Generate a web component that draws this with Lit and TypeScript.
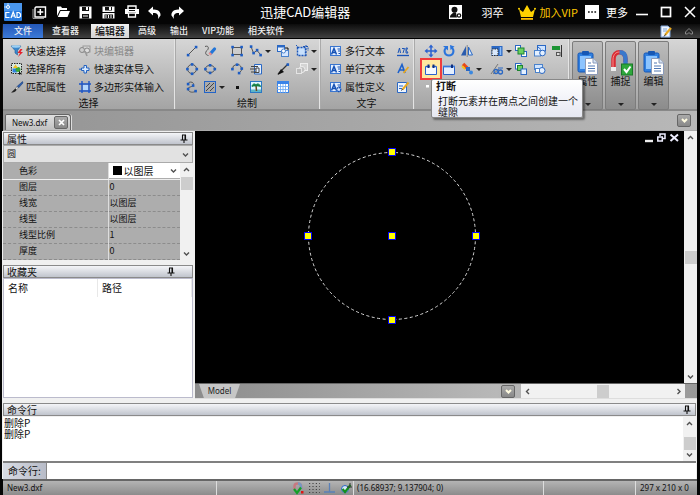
import { LitElement, html, svg, css, nothing, type SVGTemplateResult } from "lit";
import { customElement, property } from "lit/decorators.js";

const dot = (x: number, y: number) => svg`<rect x=${x - 1.2} y=${y - 1.2} width="2.600" height="2.600" fill="#1c5cc4"/>`;
const textPage = svg`<rect x=".5" y="1.5" width="10" height="9" fill="#e4efff" stroke="#3a76d0"/>
  <path d="M1.500 9.500L4 3.500 6.500 9.500M2.500 7.500H6" stroke="#1450b4" stroke-width="1.500" fill="none"/>
  <path d="M7.500 4H10M8 6H10M8.500 8.500H10" stroke="#1450b4"/>`;
const clipboard = svg`<rect x="1" y="3" width="15" height="19" rx="1.500" fill="#2f7fe0" stroke="#1757b4"/>
  <rect x="3" y="6" width="11" height="13" fill="#8cc4ff"/>
  <rect x="5" y="1" width="7" height="4" rx="1" fill="#1757b4"/>
  <path d="M8.500 8.500H16L20.500 13V24.500H8.500Z" fill="#fff" stroke="#8a9ab8"/>
  <path d="M16 8.500V13H20.500" fill="#d4e2f4" stroke="#8a9ab8"/>
  <path d="M11 13H14M11 16H18M11 18.500H18M11 21H18" stroke="#5078b4"/>`;

const ICONS: Record<string, SVGTemplateResult> = {
  logo: svg`<rect width="18" height="18" rx="1" fill="#2b7de0"/><rect width="18" height="8" fill="#4a97ee"/>
    <circle cx="4" cy="4" r="1.500" fill="none" stroke="#fff"/><path d="M4 0V2M0 4H2" stroke="#bcdcff"/>
    <path d="M5.500 9.500H1.800V14.500H5.500M7 15L9.200 9 11.500 15M8 13H10.500M13 9.500H15L16.500 11V13.500L15 14.500H13Z" fill="none" stroke="#fff" stroke-width="1.200"/>`,
  create: svg`<path d="M3 1H12.500V11H2V2Z" fill="none" stroke="#fff" stroke-width="1.400"/><path d="M7.300 3V9M4.300 6H10.300" stroke="#fff" stroke-width="1.500"/><path d="M0 3V12.500H11" stroke="#999" fill="none"/>`,
  open: svg`<path d="M1 11V1.500H5L6 3H11V5H4Z" fill="#fff"/><path d="M4.500 6H14L11.500 12H1.800Z" fill="#fff"/>`,
  save: svg`<path d="M.5 .5H12.500V12.500H.5Z" fill="#fff"/><path d="M3 1H10V5H3Z M3 8H10V12.500H3Z" fill="#111"/><rect x="7" y="1" width="2" height="3" fill="#fff"/><path d="M4 10H9" stroke="#fff"/>`,
  saveAs: svg`<path d="M.5 .5H12.500V6H.5Z M.5 7H12.500V12.500H.5Z" fill="#fff"/><path d="M3 1H10V4.500H3Z M2.500 8.500H11V12.500H2.500Z" fill="#111"/><rect x="7" y="1" width="2" height="3" fill="#fff"/><path d="M4 9V12M6.500 9V12M9 9V12" stroke="#fff"/>`,
  print: svg`<path d="M3 4V1H11V4" fill="none" stroke="#fff" stroke-width="1.400"/><path d="M0 4H14V9H11V7H3V9H0Z" fill="#fff"/><path d="M3.500 8H10.500V12H3.500Z" fill="none" stroke="#fff" stroke-width="1.300"/><rect x="4" y="5" width="6" height="1" fill="#111"/>`,
  undo: svg`<path d="M0 5L5 .5V3.500C10 3 13 6 12.500 9.500L10 13C11 8.500 9 6.800 5 7V9.500Z" fill="#fff"/>`,
  redo: svg`<path d="M13 5L8 .5V3.500C3 3 0 6 .5 9.500L3 13C2 8.500 4 6.800 8 7V9.500Z" fill="#fff"/>`,
  user: svg`<rect width="13" height="14" fill="#fff"/><circle cx="5.500" cy="4.800" r="3" fill="#111"/><path d="M1 12.500C1 9.500 3 9 4.500 7.500H7L8 12.500Z" fill="#111"/><circle cx="10" cy="10.500" r="1.700" fill="#fff" stroke="#111" stroke-width="1.200"/>`,
  crown: svg`<path d="M1 4L5 7 9 0 13 7 17 4 15 12H3Z" fill="#ffd200"/><rect x="3" y="13" width="12" height="1.800" fill="#ffc000"/><circle cx="1" cy="3.800" r="1" fill="#ffd200"/><circle cx="17" cy="3.800" r="1" fill="#ffd200"/>`,
  more: svg`<rect width="14" height="14" fill="#fff"/><path d="M3 7H4.700M6.200 7H7.900M9.400 7H11.100" stroke="#111" stroke-width="1.700"/>`,
  minimize: svg`<path d="M0 8.500H12" stroke="#fff" stroke-width="1.600"/>`,
  maximize: svg`<rect x="1.500" y="1.500" width="9" height="9" fill="none" stroke="#fff" stroke-width="1.700"/>`,
  close: svg`<path d="M1 1L11 11M11 1L1 11" stroke="#fff" stroke-width="1.500"/>`,
  note: svg`<path d="M1 1H8L10 3V12H1Z" fill="#eef5ff" stroke="#7fa4d8"/><path d="M3 4H7M3 6H7" stroke="#7fa4d8"/><path d="M11 3L5 10" stroke="#e8a820" stroke-width="2.200"/><path d="M5.500 9.500L4 11.500" stroke="#333"/>`,
  collapse: svg`<path d="M1.500 6L5 2.500 8.500 6V8H6.500L5 6.500 3.500 8H1.500Z" fill="none" stroke="#888"/>`,
  quick: svg`<path d="M0 1H10L6.500 5.500V10L4 8V5.500Z" fill="#3b88cc" stroke="#1d5c98" stroke-width=".6"/><ellipse cx="5" cy="1.500" rx="4.500" ry="1.200" fill="#9cd0f4"/><path d="M9.500 4L6.500 8H9L7 12 12 7H9.500L11.500 4Z" fill="#e4202c"/>`,
  all: svg`<rect x=".5" y=".5" width="10" height="10" fill="#d8e8e0" stroke="#222" stroke-dasharray="1.500 1"/><rect x="1.500" y="5.500" width="4.500" height="4" fill="#2e80e0"/><circle cx="7" cy="6.500" r="2.500" fill="#38a838"/><path d="M2 5L4.500 1.500 7 5Z" fill="#f0c020"/><path d="M8 7.500V12L9.200 11 11 12Z" fill="#111"/>`,
  match: svg`<path d="M11.500 .5L6 5.500 7.500 7 12 2Z" fill="#2a5cae" stroke="#143870" stroke-width=".5"/><path d="M6 5.500L7.500 7 5.500 8.500 4.500 7.500Z" fill="#ddd" stroke="#555" stroke-width=".5"/><path d="M4.500 7.500L5.500 9C4.500 11 2.500 11.500 0 11.500 2 10.500 2.500 8.500 4.500 7.500Z" fill="#222"/>`,
  blockEdit: svg`<rect x="4" y="1" width="7" height="6" fill="#d4d4d4" stroke="#999"/><circle cx="3" cy="5" r="2.500" fill="#ccc" stroke="#888"/><circle cx="8" cy="5.500" r="2.500" fill="#ddd" stroke="#888"/><path d="M6 6L8 11" stroke="#999" stroke-width="1.600"/>`,
  importSolid: svg`<path d="M5 2.500H7.500V5H10V7.500H7.500V10H5V7.500H2.500V5H5Z" fill="#d8eaff" stroke="#2362c0"/><path d="M0 6.200H2" stroke="#2362c0"/>`,
  polygon: svg`<path d="M3 0V12M10 0V12M0 3H12M0 10H12" stroke="#1b55c8" stroke-width="1.400"/><rect x="4" y="4" width="5" height="5" fill="#b4d8ff"/>`,
  line: svg`<path d="M2 10L10 2" stroke="#555"/>${dot(2, 10)}${dot(10, 2)}`,
  sketch: svg`<path d="M1 1.500C5 0 5 4 3 5.500S1 10 4.500 10.500" fill="none" stroke="#555"/><path d="M7 8L10.500 4" stroke="#2376d8" stroke-width="3.200" stroke-linecap="round"/><path d="M5.500 9.500L7 8" stroke="#e88c8c" stroke-width="3"/>`,
  rect: svg`<rect x="1.500" y="2.500" width="9" height="7" fill="none" stroke="#555"/>${dot(1.5, 2)}${dot(10.5, 2)}${dot(1.5, 10)}${dot(10.5, 10)}`,
  poly: svg`<path d="M1 1.500L3.500 8 7 5.500 10.500 9.500" fill="none" stroke="#555"/>${dot(1, 1.5)}${dot(3.5, 8)}${dot(7, 5)}${dot(10.5, 10)}`,
  insert: svg`<rect x=".5" y=".5" width="7" height="6" fill="#e8f2ff" stroke="#2a68c4"/><rect y="0" width="8" height="2.500" fill="#2a68c4"/><rect x="4.500" y="5.500" width="7" height="6" fill="#d4e6ff" stroke="#4a82cc"/><circle cx="6.500" cy="6" r="2" fill="#fff" stroke="#4a82cc"/><path d="M8 3H11V5" stroke="#111" fill="none"/>`,
  block: svg`<rect x="1.500" y="2.500" width="8" height="8" fill="#c8e0fc" stroke="#1b55b8" stroke-width="1.400" stroke-dasharray="2 1"/><path d="M0 0L3 3M7 1.500H12V6M10 0V12" stroke="#1b55b8" stroke-dasharray="2 1" fill="none"/>`,
  circle: svg`<circle cx="6" cy="6" r="4.500" fill="none" stroke="#555"/>${dot(6, 1.3)}${dot(6, 10.7)}${dot(1.3, 6)}${dot(10.7, 6)}`,
  ellipse: svg`<ellipse cx="6" cy="6" rx="4.500" ry="3.500" fill="none" stroke="#555"/>${dot(6, 2.2)}${dot(6, 9.8)}${dot(1.3, 6)}${dot(10.7, 6)}`,
  arc: svg`<path d="M1.500 6A4.500 4.500 0 1 1 8 10" fill="none" stroke="#555"/>${dot(1.3, 6)}${dot(6, 1.6)}${dot(10.7, 5.5)}${dot(8, 10)}`,
  copyBlock: svg`<path d="M4.500 1.500H11.500V11H4.500Z" fill="#e4f0ff" stroke="#2a68c4"/><path d="M1 3.500H8M0 6H6M1 9H6V5H9V9.500H4" stroke="#444" fill="none"/>`,
  ray: svg`<path d="M1 11L11 1" stroke="#333" stroke-width="1.300"/><path d="M.5 12L4 6 7 9Z" fill="#111"/>${dot(10.7, 1.5)}`,
  wipe: svg`<rect x="4.500" y=".5" width="7" height="7" fill="#d4d4d4" stroke="#eee"/><circle cx="6" cy="6.500" r="3" fill="#c0c0c0" stroke="#eee"/><rect x=".5" y="5.500" width="5" height="5" fill="#bbb" stroke="#e4e4e4"/>`,
  spline: svg`<path d="M2 3.500C2 0 8 .5 7.500 3.500S1 5.500 2 8.500 7.500 12 9.500 10" fill="none" stroke="#555"/>${dot(2, 3)}${dot(7, 4.5)}${dot(2, 8)}${dot(9.5, 10)}`,
  hatch: svg`<rect x=".5" y=".5" width="11" height="11" fill="#aaa" stroke="#2264c8"/><path d="M2 6L6 2M2 10L10 2M6 10L10 6" stroke="#444"/>`,
  point: svg`<rect x="5" y="5" width="3" height="3" fill="#111"/>`,
  image: svg`<rect x=".5" y=".5" width="11" height="11" fill="#dff4ff" stroke="#2a78c4"/><rect x="1" y="8.500" width="10" height="2.500" fill="#5cb4c8"/><path d="M6 4L6.500 10" stroke="#6a4a20" stroke-width="1.500"/><path d="M2 5.500C2 3 5 2 6 4 7 2 10 3 10.500 5.500 8.500 4.500 7 5 6 5 4.500 5 3 4.500 2 5.500Z" fill="#148044" stroke="#148044"/>`,
  table: svg`<rect x=".5" y=".5" width="11" height="11" fill="#fff" stroke="#3a84e8"/><rect width="12" height="3" fill="#3a84e8"/><path d="M3.500 3V12M6 3V12M8.500 3V12M0 5.500H12M0 8.500H12" stroke="#6aa8f4" stroke-width=".8"/>`,
  mtext: textPage,
  stext: textPage,
  atext: svg`${textPage}<circle cx="8.800" cy="8.500" r="2" fill="#cfe2ff" stroke="#1450b4" stroke-width="1.300" stroke-dasharray="1.500 .6"/>`,
  spell: svg`<path d="M0 10.500H12" stroke="#1b55b8" stroke-width="1.300"/><path d="M1 8L2.500 3 3.500 8M5 3.500H7.500L6 8M9 8V3H10.500L9.500 5.500 11 8H9" fill="none" stroke="#1b55b8"/>`,
  style: svg`<path d="M1 10L5 1.500 8 10M2.500 7H7" stroke="#1b60cc" stroke-width="1.600" fill="none"/><path d="M11.500 4L6.500 10" stroke="#e8a820" stroke-width="1.800"/>`,
  editText: svg`<path d="M.5 1.500H9.500V11.500H.5Z" fill="#eef5ff" stroke="#2a68c4"/><path d="M2 5H6M2 7.500H5" stroke="#2a68c4"/><path d="M11.500 1.500L5.500 8.500" stroke="#e8a820" stroke-width="2"/><path d="M5.500 8L4.500 9.500" stroke="#222"/>`,
  move: svg`<path d="M6 1V11M1 6H11" stroke="#2a62d0" stroke-width="1.500"/><path d="M6 -.5L8.500 2.500H3.500ZM6 12.500L8.500 9.500H3.500ZM-.5 6L2.500 3.500V8.500ZM12.500 6L9.500 3.500V8.500Z" fill="#2a62d0"/>`,
  rotate: svg`<path d="M3.500 2.500C0 5 1.500 10.500 6 10.500S12 5 8.500 2.500" fill="none" stroke="#2a74dc" stroke-width="2"/><path d="M0 1H5V5.500ZM7 0L11.500 1.500 7.500 5Z" fill="#2a74dc"/>`,
  mirror: svg`<path d="M5 1V10.500H0Z" fill="#2a5cae"/><path d="M7.500 2V10H11.500Z" fill="#d8eaff" stroke="#2a68c4"/><path d="M6.200 0V12" stroke="#666" stroke-width=".7"/>`,
  scale: svg`<rect x=".5" y="1" width="11" height="10" fill="#2a68c4"/><rect x="1" y="4" width="6" height="6.500" fill="#d8e8fc" stroke="#333" stroke-dasharray="1.500 1"/><path d="M9.500 2V10" stroke="#8cbcf8" stroke-width="1.500"/>`,
  order: svg`<rect x=".5" y=".5" width="5" height="5" fill="#fff" stroke="#2a68c4"/><rect x="6.500" y="6.500" width="5" height="5" fill="#fff" stroke="#2a68c4"/><rect x="3" y="3" width="6" height="6" fill="#6cd060" stroke="#1c8430"/>`,
  redraw: svg`<rect x="3.500" y=".5" width="8" height="5.500" fill="#cfe4ff" stroke="#2a68c4"/><rect x=".5" y="5.500" width="6" height="5.500" fill="#e4f0ff" stroke="#4a82cc"/><circle cx="8.500" cy="8" r="2.800" fill="#e4f0ff" stroke="#2a68c4"/><path d="M4 2L7 4.500" stroke="#2a68c4"/>`,
  align: svg`<path d="M9.500 0V12" stroke="#333"/><rect x="0" y="1" width="8" height="4" fill="#1c9434"/><rect x="4.500" y="7.500" width="3.500" height="3" fill="#ddd" stroke="#555"/>`,
  breakAt: svg`<path d="M.5 3.500H11.500V11.500H.5Z" fill="#f4f9ff" stroke="#2a62cc"/><rect x="4.500" y="2.500" width="3" height="2" fill="#ffe9a0"/><path d="M1 3.500H4.500M7.500 3.500H11" stroke="#2a62cc" stroke-width="1.600"/><path d="M3.500 1.500V5M8.500 1.500V5" stroke="#0c2e80" stroke-width="2"/>`,
  breakPoint: svg`<path d="M.5 3.500H11.500V11.500H.5Z" fill="#e4efff" stroke="#2a62cc"/><path d="M0 3.500H12" stroke="#3a78dc" stroke-width="1.800"/><path d="M9 1.500V5" stroke="#0c2e80" stroke-width="2"/>`,
  explode: svg`<path d="M2 1L6 5" stroke="#e84818" stroke-width="3.500"/><path d="M1 3L4 6" stroke="#f0c020" stroke-width="2"/><rect x="5" y="4" width="4" height="4" fill="#2a68c4"/><circle cx="10" cy="9.500" r="2" fill="#3a88e0"/>`,
  trim: svg`<path d="M0 11L7 1M2 11L8 6" stroke="#777"/><circle cx="5" cy="8.500" r="2" fill="none" stroke="#2a68c4" stroke-width="1.300"/><circle cx="9.500" cy="9" r="2" fill="none" stroke="#2a68c4" stroke-width="1.300"/><path d="M7 5H12" stroke="#2a68c4"/>`,
  group: svg`<rect x=".5" y=".5" width="5.500" height="5.500" fill="#fff" stroke="#2a68c4"/><rect x="2.500" y="2.500" width="5" height="5" fill="#6cd060" stroke="#1c8430"/><rect x="6" y="6" width="5.500" height="5.500" fill="#e4f0ff" stroke="#2a68c4"/>`,
  ungroup: svg`<rect x=".5" y="1.500" width="8" height="5" fill="#cfe4ff" stroke="#4a82cc"/><circle cx="8" cy="7.500" r="3" fill="#e4f0ff" stroke="#2a68c4"/><rect x="1.500" y="5.500" width="4" height="4" fill="#fff" stroke="#4a82cc"/>`,
  offset: svg`<rect x="1" y="4" width="3" height="2.500" fill="#fff"/>`,
  props: clipboard,
  snap: svg`<path d="M3.500 21V9C3.500 0 15.500 0 15.500 9V12" fill="none" stroke="#d82c34" stroke-width="4.500"/><path d="M9.500 2.300C14 2.300 15.500 5 15.500 9V16" fill="none" stroke="#3a78cc" stroke-width="4.500"/><path d="M3 17V9C3.500 4 6 2 9.500 2" fill="none" stroke="#f88c8c"/><rect x="1" y="17" width="5" height="4" fill="#eee"/><rect x="11.500" y="14" width="11" height="11" fill="#2ea83c" stroke="#1a7828"/><path d="M14 19L16.500 22 20.500 16.500" fill="none" stroke="#fff" stroke-width="2"/>`,
  edit: clipboard,
  pin: svg`<path d="M3 1H7M3.500 1V6M6.500 1V6M1.500 6H8.500M5 6V9" stroke="#111" stroke-width="1.100" fill="none"/><path d="M6 1V6" stroke="#111"/>`,
  mdiMin: svg`<path d="M0 7H8" stroke="#eee" stroke-width="2.400"/>`,
  mdiRestore: svg`<path d="M3 3V1H8V5.500H6" fill="none" stroke="#eef" stroke-width="1.500"/><rect x=".8" y="4" width="4.500" height="4" fill="none" stroke="#eef" stroke-width="1.500"/>`,
  mdiClose: svg`<path d="M.5 1.500L8 8M8 1.500L.5 8" stroke="#eef" stroke-width="2"/>`,
  up: svg`<path d="M2 6L4.500 3.500 7 6" fill="none" stroke="#505050" stroke-width="1.400"/>`,
  down: svg`<path d="M2 3.500L4.500 6 7 3.500" fill="none" stroke="#505050" stroke-width="1.400"/>`,
  left: svg`<path d="M6 2L3.500 4.500 6 7" fill="none" stroke="#505050" stroke-width="1.400"/>`,
  right: svg`<path d="M3.500 2L6 4.500 3.500 7" fill="none" stroke="#505050" stroke-width="1.400"/>`,
  menu: svg`<path d="M2 3L4.500 5.500 7 3" fill="none" stroke="#fffbe0" stroke-width="2"/>`,
  tabClose: svg`<path d="M2 2L7 7M7 2L2 7" stroke="#fff" stroke-width="1.700"/>`,
  osnap: svg`<path d="M2.500 7V4C2.500 .5 9 .5 9 4V7" fill="none" stroke="#c87880" stroke-width="2.500"/><path d="M6 1.500C9 1.500 9 3 9 7" fill="none" stroke="#7898c0" stroke-width="2.500"/><path d="M2 7L5 11 9 5.500" fill="none" stroke="#14a028" stroke-width="2.200"/><rect x="9" y="9" width="2.500" height="2.500" fill="#e01414"/>`,
  grid: svg`<path d="M1 1.500H12M1 4.500H12M1 7.500H12M1 10.500H12" stroke="#444" stroke-width="1.200" stroke-dasharray="1.200 2.200"/>`,
  ortho: svg`<path d="M5.500 1V10M0 10H11" stroke="#5a80b8" stroke-width="1.300"/>`,
  polar: svg`<circle cx="5" cy="7" r="3.500" fill="#d8e8f8" stroke="#2a68c4"/><path d="M2.500 7L5 10 10.500 3" fill="none" stroke="#14901c" stroke-width="2.200"/><path d="M7 5H12M10 1V4" stroke="#333"/>`,
};

@customElement("cad-icon")
export class CadIcon extends LitElement {
  @property() name = "";
  @property({ type: Number }) w = 12;
  @property({ type: Number }) h = 12;
  static styles = css`
    :host { display: inline-flex; flex: none; }
    svg { display: block; overflow: visible; }
  `;
  render() {
    return html`<svg width=${this.w} height=${this.h} viewBox="0 0 ${this.w} ${this.h}" aria-hidden="true">${ICONS[this.name]}</svg>`;
  }
}

const icon = (name: string, w = 12, h = w) => html`<cad-icon name=${name} .w=${w} .h=${h}></cad-icon>`;

const QUICK: [string, string, number][] = [
  ["create", "新建", 13], ["open", "打开", 14], ["save", "保存", 13], ["saveAs", "另存为", 13],
  ["print", "打印", 14], ["undo", "撤销", 13], ["redo", "重做", 13],
];
const TABS = ["文件", "查看器", "编辑器", "高级", "输出", "VIP功能", "相关软件"];
const SELECT_TOOLS = [
  ["quick", "快速选择"], ["blockEdit", "块编辑器"],
  ["all", "选择所有"], ["importSolid", "快速实体导入"],
  ["match", "匹配属性"], ["polygon", "多边形实体输入"],
];
const DRAW_TOOLS = [
  "line", "sketch", "rect", "poly+", "insert", "block+",
  "circle", "ellipse", "arc", "copyBlock", "ray", "wipe+",
  "spline", "hatch+", "point", "image", "table",
];
const TEXT_TOOLS = [
  ["mtext", "多行文本"], ["spell", ""], ["stext", "单行文本"], ["style", ""], ["atext", "属性定义"], ["editText", ""],
];
const MODIFY_TOOLS = [
  "move", "rotate", "mirror", "scale+", "order", "redraw", "align",
  "breakAt", "breakPoint", "explode+", "trim+", "group", "ungroup", "",
  "offset",
];
const PROPS = [["图层", "0"], ["线宽", "以图层"], ["线型", "以图层"], ["线型比例", "1"], ["厚度", "0"]];
const GRIPS = [[197, 21], [113, 105], [197, 105], [281, 105], [197, 189]];

@customElement("app-root")
export class AppRoot extends LitElement {
  static styles = css`
    :host {
      display: flex; flex-direction: column; box-sizing: border-box; min-height: 100vh;
      padding: 0 3px 2px 2px; background: #050505; color: #111;
      font: 10px/12px "Noto Sans CJK SC", "Noto Sans", sans-serif;
    }
    * { box-sizing: border-box; }
    button, select, input, textarea { font: inherit; color: inherit; margin: 0; padding: 0; border: 0; border-radius: 0; background: none; outline: none; }
    button { display: inline-flex; align-items: center; white-space: nowrap; }
    select { appearance: none; }
    .title { display: flex; align-items: center; height: 24px; padding-left: 2px; color: #fff; font-size: 11px; line-height: 16px; }
    .quick { display: flex; margin-left: 6px; }
    .quick button { width: 23px; justify-content: center; }
    .name { flex: 1; margin: 0; padding-right: 28px; text-align: center; font-size: 13px; line-height: 20px; font-weight: 400; }
    .user { gap: 19px; }
    .vip { margin-left: 15px; gap: 3px; color: #ffc800; }
    .more { margin-left: 7px; gap: 7px; }
    .win { display: flex; gap: 12px; margin: 0 1px 0 8px; }
    .tabs { display: flex; height: 15px; margin-right: -3px; background: linear-gradient(#0c0c0c, #404040); border-bottom: 1px solid #000; color: #eee; font-size: 9px; font-weight: 500; }
    .tabs a { padding: 0 7px; line-height: 14px; color: inherit; text-decoration: none; white-space: nowrap; }
    .tabs .file { padding: 0 11px; margin: 0 2px 0 1px; background: linear-gradient(#2458b8, #3c7ad8); }
    .tabs .on { padding: 0 4px; margin: 0 2px 0 5px; background: linear-gradient(#f0f0f0, #d4d4d4); color: #111; font-size: 10px; }
    .tabs .right { display: flex; gap: 12px; align-items: center; margin-left: auto; padding-right: 6px; }
    .ribbon { display: flex; margin-left: 1px; height: 72px; background: linear-gradient(#d6d6d6, #a4a4a4); border-bottom: 2px solid #888; }
    .group { display: flex; flex-direction: column; justify-content: space-between; flex: none; border-right: 1px solid #e4e4e4; box-shadow: 1px 0 #aaa; padding-top: 3px; }
    .group h2 { margin: 0; font-size: 10px; line-height: 14px; font-weight: 400; text-align: center; }
    .tools { display: grid; grid-auto-rows: 18px; align-items: center; }
    .tools button { gap: 3px; }
    .tools button:disabled { color: #8a8a8a; }
    .select { width: 172px; }
    .select .tools { padding-left: 8px; grid-template-columns: 68px auto; }
    .draw { width: 145px; }
    .draw .tools { padding-left: 11px; grid-template-columns: 18px 27px 19px 27px 19px 22px; }
    .text { width: 94px; }
    .text .tools { padding-left: 10px; grid-template-columns: 67px 12px; }
    .modify { width: 155px; }
    .modify .tools { padding-left: 11px; grid-template-columns: 18px 18px 30px 24px 19px 18px 16px; }
    .arrow { border: 3px solid transparent; border-top-color: #222; border-bottom: 0; }
    .hit { position: relative; display: flex; }
    .hit > button { background: #ffe9a0; box-shadow: 0 0 0 3px #ffe9a0, 0 0 0 5px #f03c3c; }
    .tip { position: absolute; z-index: 2; top: 16px; left: 6px; width: 152px; padding: 0 2px 0 4px; background: linear-gradient(#fff, #e6e8f2); border: 1px solid #888; border-radius: 2px; box-shadow: 2px 2px 2px #0006; line-height: 11px; }
    .tip b { display: block; line-height: 12px; }
    .tip p { margin: 0; padding: 3px 0 0 2px; }
    .big { flex-direction: column; width: 31px; height: 69px; margin: 2px 2px 0 0; padding: 8px 0 3px; border: 1px solid #7c7c7c; border-radius: 2px; background: linear-gradient(#bcbcbc, #8c8c8c); }
    .big:first-of-type { margin-left: 3px; }
    .big .arrow { margin-top: auto; }
    .docs { display: flex; align-items: flex-end; justify-content: space-between; height: 20px; margin-left: 1px; padding: 0 6px 0 2px; background: linear-gradient(90deg, #949494, #b8b8b8); border-bottom: 1px solid #aaa; }
    .doc { display: flex; align-items: center; justify-content: space-between; width: 66px; height: 16px; padding: 0 2px 0 6px; border: 1px solid #666; border-bottom: 0; border-radius: 2px 3px 0 0; background: linear-gradient(#e0e0e0, #c0c0c0); box-shadow: 1px 0 #ddd; }
    .small { font: 8px/12px "Noto Sans", "Noto Sans CJK SC", sans-serif; }
    .chip { justify-content: center; width: 14px; height: 13px; border: 1px solid #666; border-radius: 2px; background: linear-gradient(#aaa, #888); }
    .docs .chip { align-self: center; }
    .main { flex: 1; display: flex; background: #f0f0f0; min-height: 0; }
    .side { display: flex; flex-direction: column; width: 193px; flex: none; padding: 1px 2px 1px 1px; }
    .bar { display: flex; align-items: center; justify-content: space-between; height: 13px; flex: none; margin: 0; padding: 0 3px; border: 1px solid #8a8a8a; background: linear-gradient(#f4f5f8, #c0c4cd); font-size: 10px; line-height: 11px; font-weight: 400; }
    .combo { display: flex; align-items: center; height: 18px; border: 1px solid #aaa; background: #e2e2e2; font-size: 9px; }
    .combo select { flex: 1; padding-left: 3px; height: 16px; }
    .combo cad-icon { padding-right: 2px; }
    .props { display: flex; height: 97px; }
    table { flex: 1; border-collapse: collapse; table-layout: fixed; background: #adadad; font-size: 9px; line-height: 12px; }
    th, td { height: 16px; padding: 0; text-align: left; font-weight: 400; border-bottom: 1px dashed #8c8c8c; }
    th { width: 105px; padding-left: 16px; border-right: 1px solid #ddd; }
    td { padding-left: 1px; }
    tr:first-child th { border-bottom: 1px solid #eee; }
    tr:first-child td { padding: 0; border-bottom: 1px solid #eee; }
    .color { display: flex; align-items: center; height: 15px; padding: 0 2px 0 4px; background: #fff; font-size: 10px; }
    .color i { width: 9px; height: 9px; background: #000; }
    .color select { flex: 1; padding-left: 2px; height: 15px; }
    .scroll { display: flex; align-items: center; justify-content: space-between; flex: none; background: #f1f1f1; }
    .scroll.v { flex-direction: column; width: 13px; padding: 2px 0; }
    .scroll i { background: #cdcdcd; width: 12px; height: 13px; }
    .spring { flex: 1; }
    .props .scroll i { margin-top: 3px; }
    .fav { margin-top: 5px; padding-right: 16px; }
    .list { flex: 1; display: flex; align-items: flex-start; border: 1px solid #bbc; background: #fff; }
    .list span { width: 94px; padding: 3px 0 3px 4px; border-right: 1px solid #e8e8e8; }
    .view { flex: 1; display: flex; flex-direction: column; min-width: 0; }
    .stage { flex: 1; display: flex; min-height: 0; }
    .canvas { position: relative; flex: 1; overflow: hidden; background: #000; }
    .canvas svg { display: block; }
    .mdi { position: absolute; top: 2px; right: 5px; display: flex; gap: 4px; }
    .sheets { display: flex; height: 16px; background: linear-gradient(90deg, #8c8c8c, #b8b8b8 60%, #999); border-top: 1px solid #666; border-bottom: 1px solid #ddd; }
    .sheet { justify-content: center; width: 41px; height: 14px; margin-left: 4px; color: #222; background: #c6c6c6; clip-path: polygon(0 0, 100% 0, 88% 100%, 12% 100%); }
    .sheets .chip { margin: 1px 6px 0 auto; }
    .sheets .scroll { width: 164px; height: 14px; padding: 0 2px; margin-right: 12px; }
    .cmd { display: flex; flex-direction: column; background: #f0f0f0; padding: 4px 1px 0; }
    .log { display: flex; height: 46px; margin-top: 1px; background: #fff; border-bottom: 2px solid #808080; }
    .log textarea { flex: 1; padding: 0 1px; resize: none; overflow: hidden; line-height: 11px; }
    .entry { display: flex; height: 16px; }
    .entry label { width: 44px; padding-left: 5px; line-height: 15px; background: linear-gradient(90deg, #d8dce4, #b8bcc8); border-right: 1px solid #888; }
    .entry input { flex: 1; min-width: 0; background: #fff; padding: 0 3px; }
    .status { display: flex; height: 16px; margin-left: 1px; border-top: 2px solid #666; background: linear-gradient(#b4b4b4, #8c8c8c); line-height: 13px; }
    .status > * { border-right: 1px solid #ddd; padding: 0 4px; }
    .file-name { width: 214px; }
    .modes { display: flex; align-items: center; justify-content: flex-end; gap: 4px; width: 137px; padding: 0 1px; }
    .status .coord { flex: 1; padding: 0 3px; }
    .empty { width: 92px; }
    .status .size { width: 61px; border: 0; }
  `;

  private tool(key: string) {
    if (!key) return html`<span></span>`;
    const name = key.replace("+", "");
    const button = html`<button aria-label=${name}>${icon(name)}${key.endsWith("+") ? html`<span class="arrow"></span>` : nothing}</button>`;
    return name === "breakAt"
      ? html`<div class="hit">${button}<div class="tip" role="tooltip"><b>打断</b><p>打断元素并在两点之间创建一个缝隙</p></div></div>`
      : button;
  }

  private labelled([name, label]: string[]) {
    return html`<button ?disabled=${name === "blockEdit"} aria-label=${label || name}>${icon(name)}${label}</button>`;
  }

  render() {
    return html`
      <header class="title">
        ${icon("logo", 18)}
        <div class="quick">${QUICK.map(([n, l, w]) => html`<button aria-label=${l}>${icon(n, w)}</button>`)}</div>
        <h1 class="name">迅捷CAD编辑器</h1>
        <button class="user">${icon("user", 13, 14)}羽卒</button>
        <button class="vip">${icon("crown", 18, 15)}加入VIP</button>
        <button class="more">${icon("more", 14)}更多</button>
        <div class="win">
          <button aria-label="最小化">${icon("minimize")}</button>
          <button aria-label="最大化">${icon("maximize")}</button>
          <button aria-label="关闭">${icon("close")}</button>
        </div>
      </header>
      <nav class="tabs">
        ${TABS.map((t, i) => html`<a href="#" class=${i === 0 ? "file" : i === 2 ? "on" : ""}>${t}</a>`)}
        <div class="right"><button aria-label="样式">${icon("note")}</button><button aria-label="折叠">${icon("collapse", 10)}</button></div>
      </nav>
      <section class="ribbon">
        <div class="group select"><div class="tools">${SELECT_TOOLS.map((t) => this.labelled(t))}</div><h2>选择</h2></div>
        <div class="group draw"><div class="tools">${DRAW_TOOLS.map((t) => this.tool(t))}</div><h2>绘制</h2></div>
        <div class="group text"><div class="tools">${TEXT_TOOLS.map((t) => this.labelled(t))}</div><h2>文字</h2></div>
        <div class="group modify"><div class="tools">${MODIFY_TOOLS.map((t) => this.tool(t))}</div></div>
        ${[["props", "属性"], ["snap", "捕捉"], ["edit", "编辑"]].map(([n, l]) => html`
          <button class="big">${icon(n, 22, 25)}<span>${l}</span><i class="arrow"></i></button>`)}
      </section>
      <div class="docs">
        <div class="doc small">New3.dxf<button class="chip" aria-label="关闭文档">${icon("tabClose", 9)}</button></div>
        <button class="chip" aria-label="文档列表">${icon("menu", 9)}</button>
      </div>
      <main class="main">
        <aside class="side">
          <h2 class="bar">属性${icon("pin", 10)}</h2>
          <div class="combo"><select aria-label="对象"><option>圆</option></select>${icon("down", 9)}</div>
          <div class="props">
            <table>
              <tr><th><label for="color">色彩</label></th><td><div class="color"><i></i><select id="color"><option>以图层</option></select>${icon("down", 9)}</div></td></tr>
              ${PROPS.map(([k, v]) => html`<tr><th>${k}</th><td>${v}</td></tr>`)}
            </table>
            <div class="scroll v">${icon("up", 9)}<i></i><span class="spring"></span>${icon("down", 9)}</div>
          </div>
          <h2 class="bar fav">收藏夹${icon("pin", 10)}</h2>
          <div class="list"><span>名称</span><span>路径</span></div>
        </aside>
        <section class="view">
          <div class="stage">
            <div class="canvas">
              <svg width="490" height="252">
                <circle cx="197" cy="105" r="83.5" fill="none" stroke="#d8d8d8" stroke-dasharray="3 2.500"/>
                ${GRIPS.map(([x, y]) => svg`<rect x=${x - 3.5} y=${y - 3.5} width="7" height="7" fill="#ff0" stroke="#00f"/>`)}
              </svg>
              <div class="mdi">
                <button aria-label="最小化文档">${icon("mdiMin", 8)}</button>
                <button aria-label="还原文档">${icon("mdiRestore", 9)}</button>
                <button aria-label="关闭文档窗口">${icon("mdiClose", 9)}</button>
              </div>
            </div>
            <div class="scroll v">${icon("up", 9)}<i></i>${icon("down", 9)}</div>
          </div>
          <div class="sheets">
            <button class="sheet small">Model</button>
            <button class="chip" aria-label="布局列表">${icon("menu", 9)}</button>
            <div class="scroll">${icon("left", 9)}<i></i>${icon("right", 9)}</div>
          </div>
        </section>
      </main>
      <section class="cmd">
        <h2 class="bar">命令行${icon("pin", 10)}</h2>
        <div class="log">
          <textarea readonly aria-label="命令记录" .value=${"删除P\n删除P"}></textarea>
          <div class="scroll v">${icon("up", 9)}<span class="spring"></span><i></i>${icon("down", 9)}</div>
        </div>
        <div class="entry"><label for="cmd">命令行:</label><input id="cmd" type="text"></div>
      </section>
      <footer class="status small">
        <span class="file-name">New3.dxf</span>
        <span class="modes">${["osnap", "grid", "ortho", "polar"].map((n) => icon(n))}</span>
        <span class="coord">(16.68937; 9.137904; 0)</span>
        <span class="empty"></span>
        <span class="size">297 x 210 x 0</span>
      </footer>
    `;
  }
}
